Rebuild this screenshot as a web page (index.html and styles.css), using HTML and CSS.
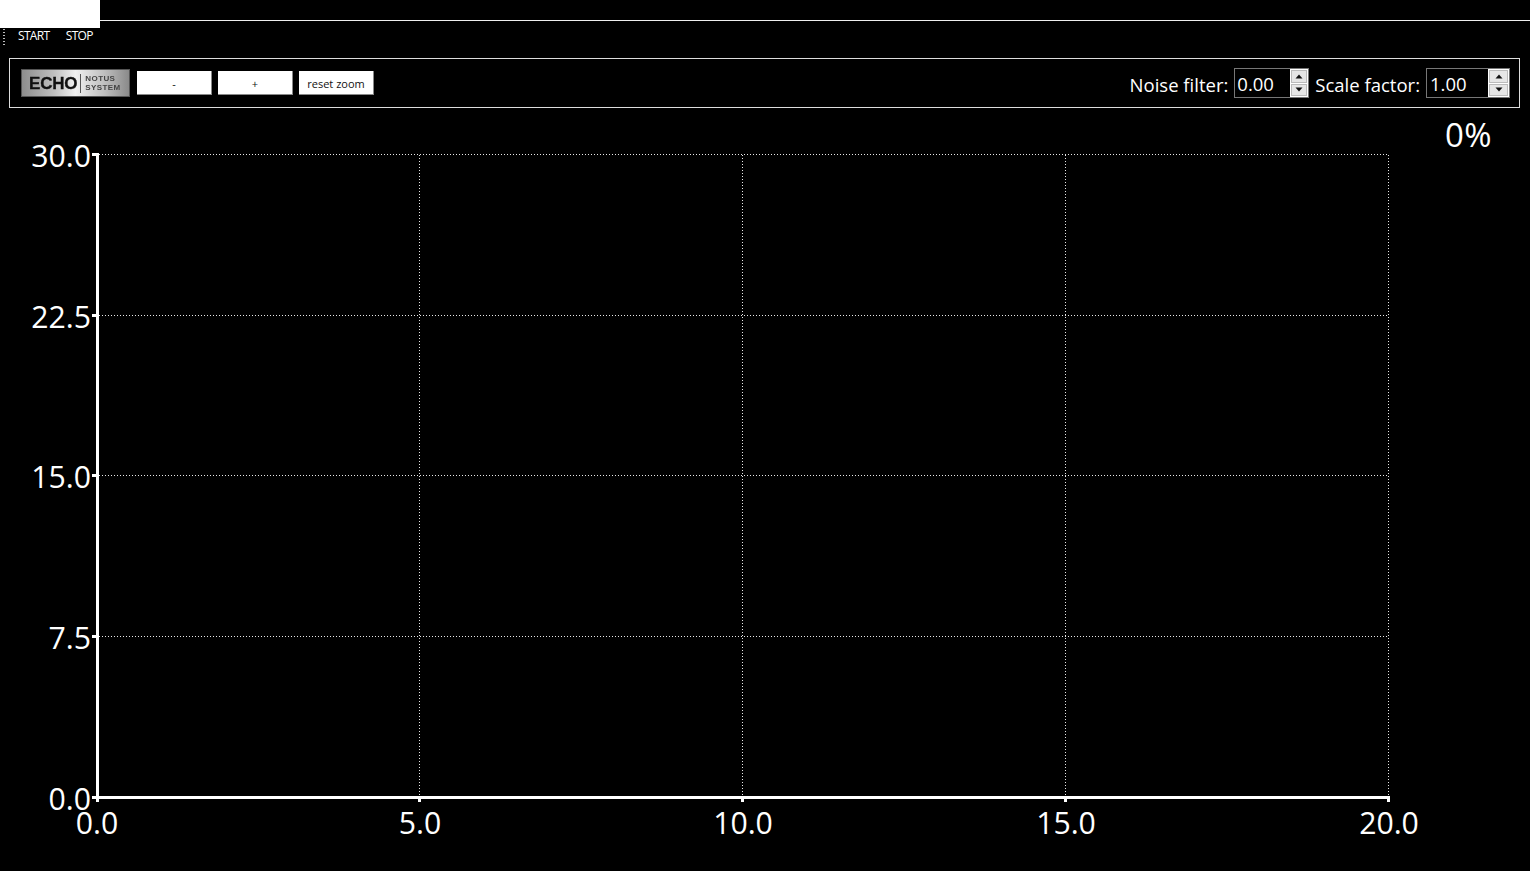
FILE: index.html
```html
<!DOCTYPE html>
<html lang="en">
<head>
<meta charset="utf-8">
<title>Echo</title>
<link rel="stylesheet" href="styles.css">
</head>
<body>
<div class="app">
  <div class="tabstrip">
    <div class="tab"></div>
    <div class="tabline"></div>
  </div>
  <div class="menubar">
    <div class="grip"></div>
    <span class="menuitem">START</span>
    <span class="menuitem">STOP</span>
  </div>
  <div class="group">
    <div class="left">
      <div class="logo">
        <span class="logo-main">ECHO</span>
        <span class="logo-sub">NOTUS<br>SYSTEM</span>
      </div>
      <button class="btn">-</button>
      <button class="btn">+</button>
      <button class="btn">reset zoom</button>
    </div>
    <div class="right">
      <span class="label">Noise filter:</span>
      <div class="spin spin-a">
        <span class="value">0.00</span>
        <div class="arrows">
          <div class="arrow"><svg width="8" height="5" viewBox="0 0 8 5"><path d="M4 0.5 7.5 4.5H0.5Z"/></svg></div>
          <div class="arrow"><svg width="8" height="5" viewBox="0 0 8 5"><path d="M0.5 0.5H7.5L4 4.5Z"/></svg></div>
        </div>
      </div>
      <span class="label">Scale factor:</span>
      <div class="spin spin-b">
        <span class="value">1.00</span>
        <div class="arrows">
          <div class="arrow"><svg width="8" height="5" viewBox="0 0 8 5"><path d="M4 0.5 7.5 4.5H0.5Z"/></svg></div>
          <div class="arrow"><svg width="8" height="5" viewBox="0 0 8 5"><path d="M0.5 0.5H7.5L4 4.5Z"/></svg></div>
        </div>
      </div>
    </div>
  </div>
  <svg class="chart" width="1530" height="763" viewBox="0 108 1530 763">
    <g class="grid">
      <path d="M99 154.5H1389"/>
      <path d="M99 315.5H1389"/>
      <path d="M99 475.5H1389"/>
      <path d="M99 636.5H1389"/>
      <path d="M419.5 155V796"/>
      <path d="M742.5 155V796"/>
      <path d="M1065.5 155V796"/>
      <path d="M1388.5 155V796"/>
    </g>
    <g class="axis">
      <path class="thick" d="M97.5 153V802"/>
      <path class="thick" d="M92 797.5H1390"/>
      <path class="tick" d="M92 154.5H99M92 315.5H99M92 475.5H99M92 636.5H99"/>
      <path class="tick" d="M419.5 797V802M742.5 797V802M1065.5 797V802M1388.5 797V802"/>
    </g>
    <g class="labels">
      <text class="end" x="91" y="167">30.0</text>
      <text class="end" x="91" y="328">22.5</text>
      <text class="end" x="91" y="488">15.0</text>
      <text class="end" x="91" y="649">7.5</text>
      <text class="end" x="91" y="810">0.0</text>
      <text class="mid" x="97" y="834">0.0</text>
      <text class="mid" x="420" y="834">5.0</text>
      <text class="mid" x="743" y="834">10.0</text>
      <text class="mid" x="1066" y="834">15.0</text>
      <text class="mid" x="1389" y="834">20.0</text>
      <text class="percent" x="1445" y="147">0%</text>
    </g>
  </svg>
</div>
</body>
</html>
```
FILE: styles.css
```css
* { box-sizing: border-box; }
html, body { margin: 0; padding: 0; background: #000; }
body { font-family: "Open Sans", "Noto Sans", sans-serif; color: #fff; overflow: hidden; }
.app { width: 1530px; height: 871px; display: flex; flex-direction: column; background: #000; overflow: hidden; }

.tabstrip { display: flex; height: 28px; flex: none; align-items: flex-start; }
.tab { width: 100px; height: 28px; background: #fff; }
.tabline { flex: 1; height: 21px; border-bottom: 1px solid #f0f0f0; }

.menubar { display: flex; height: 30px; flex: none; padding-left: 3px; font-size: 12px; align-items: flex-start; }
.grip { width: 2px; height: 17px; margin-right: 13px; background: repeating-linear-gradient(to bottom, #bbb 0 1px, transparent 1px 3px); margin-top: 1px; }
.menuitem { line-height: 15px; letter-spacing: -0.7px; margin-right: 16.5px; }

.group { margin: 0 10px 0 9px; height: 50px; flex: none; border: 1px solid #ddd; display: flex; align-items: flex-start; justify-content: space-between; padding: 10px 9px 0 11px; }
.left { display: flex; gap: 6px; align-items: flex-start; }
.logo { width: 109px; height: 28px; margin-right: 1px; border: 1px solid #555; background: linear-gradient(90deg, #8d8d8d 0%, #c0c0c0 30%, #f0f0f0 50%, #bdbdbd 78%, #8a8a8a 100%); display: flex; align-items: center; padding-left: 7px; color: #111; font-family: "Liberation Sans", Arial, sans-serif; filter: blur(0.35px); }
.logo-main { font-size: 17px; font-weight: 700; letter-spacing: -0.2px; padding-right: 3px; border-right: 1px solid #555; line-height: 19px; height: 19px; -webkit-text-stroke: 0.3px #111; }
.logo-sub { font-size: 8px; font-weight: 700; line-height: 9px; color: #444; padding-left: 4px; letter-spacing: 0.4px; }
.btn { width: 75px; height: 24px; margin-top: 2px; padding: 2px 0 0; border: none; border-right: 1px solid #888; border-bottom: 1px solid #888; background: #fff; color: #111; font-family: "Open Sans", sans-serif; font-size: 11px; line-height: 20px; }

.right { display: flex; align-items: flex-start; }
.label { font-size: 18.5px; line-height: 30px; margin-top: 1px; margin-left: 6px; margin-right: 6px; }
.spin { height: 30px; margin-top: -1px; border: 1px solid #777; display: flex; justify-content: space-between; }
.spin-a { width: 75px; }
.spin-b { width: 84px; }
.spin-b .arrows { width: 21px; }
.value { font-size: 18.5px; line-height: 30px; padding-left: 2px; }
.spin-b .value { padding-left: 3px; }
.arrows { width: 18px; background: #fff; padding: 1px; display: flex; flex-direction: column; gap: 1px; }
.arrow { flex: 1; background: #e6e6e6; border: 1px solid #bbb; display: flex; align-items: center; justify-content: center; }
.arrow svg { fill: #111; display: block; }

.chart { display: block; flex: none; }
.grid path { stroke: #e8e8e8; stroke-width: 1; stroke-dasharray: 1 2; fill: none; }
.thick { stroke: #fff; stroke-width: 3; fill: none; }
.tick { stroke: #fff; stroke-width: 3; fill: none; }
.labels text { fill: #fff; font-family: "Open Sans", sans-serif; font-size: 30.2px; }
.labels .end { text-anchor: end; }
.labels .mid { text-anchor: middle; }
.labels .percent { font-size: 33px; letter-spacing: 0.5px; }
```
